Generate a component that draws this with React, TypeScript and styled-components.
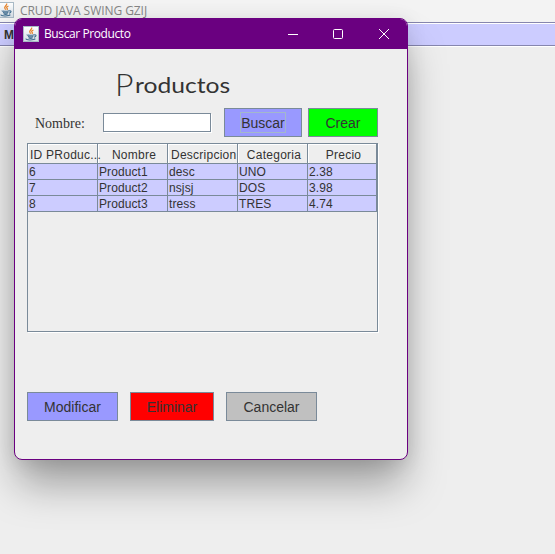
import React from "react";
import styled, { createGlobalStyle } from "styled-components";

const LINE = "#7a8a99";
const LILAC = "#ccccff";
const PURPLE = "#6a0080";
const SANS = '"Liberation Sans", Arial, sans-serif';
const UI = '"Open Sans", "Noto Sans", sans-serif';

const GlobalStyle = createGlobalStyle`
  *, *::before, *::after { box-sizing: border-box; }
  html, body { margin: 0; padding: 0; overflow: hidden; background: #eeeeee; }
`;

const MainFrame = styled.div`
  position: relative;
  width: 555px;
  height: 554px;
  overflow: hidden;
  background: #eeeeee;
  color: #333333;
  font-family: ${SANS};
`;

const MainTitleBar = styled.header`
  display: flex;
  align-items: center;
  height: 22px;
  padding: 0 0 2px;
  gap: 6px;
  background: #f3f3f3;
  color: #868686;
  font: 12px/20px ${UI};
`;

const MainTitle = styled.span`
  padding-top: 2px;
  letter-spacing: -0.06px;
  white-space: nowrap;
`;

const MainIcon = styled.span`
  display: flex;
  width: 14px;
  justify-content: flex-end;

  svg { flex: none; }
`;

const MenuBar = styled.nav`
  height: 25px;
  padding: 2px 4px 0;
  border-top: 1px solid #8686ae;
  border-bottom: 1px solid #ffffff;
  background: ${LILAC};
  box-shadow: inset 0 1px #ffffff, inset 0 -1px #8686ae;
  font: bold 12px/20px ${SANS};
`;

const Dialog = styled.section`
  position: absolute;
  left: 14px;
  top: 18px;
  width: 394px;
  height: 442px;
  display: flex;
  flex-direction: column;
  overflow: hidden;
  border: 1px solid ${PURPLE};
  border-radius: 8px;
  background: #eeeeee;
  box-shadow: 0 28px 42px -4px rgba(0, 0, 0, 0.34), 0 2px 20px rgba(0, 0, 0, 0.1);
`;

const DialogTitleBar = styled.header`
  display: flex;
  align-items: center;
  flex: none;
  height: 30px;
  padding-left: 8px;
  background: ${PURPLE};
  color: #ffffff;
`;

const DialogTitle = styled.span`
  flex: 1;
  padding-left: 5px;
  font: 12px/18px ${UI};
  letter-spacing: -0.4px;
`;

const WindowControls = styled.div`
  display: flex;
`;

const WindowButton = styled.button`
  display: grid;
  place-items: center;
  width: 45.5px;
  height: 30px;
  padding: 0 1px 0 0;
  border: 0;
  background: none;
  color: #ffffff;
`;

const Content = styled.main`
  display: flex;
  flex-direction: column;
  padding: 0 29px 0 12px;
`;

const Heading = styled.h1`
  display: flex;
  align-items: baseline;
  width: 140px;
  height: 40px;
  margin: 16px 0 3px 88px;
  font: 400 22px/40px Lato, sans-serif;
  white-space: nowrap;
`;

const Initial = styled.span`
  display: inline-block;
  font-size: 32px;
  line-height: 32px;
  font-weight: 300;
  transform: translateY(3px);
`;

const HeadingRest = styled.span`
  display: inline-block;
  margin-left: 1px;
  transform: scaleX(1.12);
  transform-origin: left;
`;

const SearchRow = styled.div`
  display: flex;
  align-items: center;
  height: 29px;
`;

const Label = styled.label`
  width: 76px;
  padding: 2px 0 0 8px;
  font: 14px/18px "Liberation Serif", serif;
`;

const Field = styled.input`
  width: 108px;
  height: 19px;
  margin: 0 13px 0 0;
  padding: 0 3px;
  border: 1px solid ${LINE};
  border-radius: 0;
  background: #ffffff;
  box-shadow: 1px 1px #ffffff;
  outline: 0;
`;

const SwingButton = styled.button<{ $fill: string; $width: number }>`
  display: grid;
  place-items: center;
  width: ${(p) => p.$width}px;
  height: 29px;
  padding: 2px 0 0;
  border: 1px solid ${LINE};
  background: ${(p) => p.$fill};
  color: #333333;
  font: 14px/19px ${SANS};
`;

const FocusRing = styled.span`
  height: 21px;
  margin: -2px -1px 0;
  padding-top: 1px;
  border: 1px solid #a3b8cc;
`;

const Gap = styled.span<{ $size: number }>`
  width: ${(p) => p.$size}px;
`;

const ScrollPane = styled.div`
  width: 351px;
  height: 189px;
  margin-top: 6px;
  border: 1px solid ${LINE};
  box-shadow: 1px 1px #ffffff;
`;

const Table = styled.table`
  width: 349px;
  table-layout: fixed;
  border-collapse: separate;
  border-spacing: 0;
  font: 12px/14px ${SANS};
`;

const HeadCell = styled.th<{ $inset?: number }>`
  height: 20px;
  padding: 3px 0 0 ${(p) => p.$inset ?? 3}px;
  border-right: 1px solid ${LINE};
  border-bottom: 1px solid ${LINE};
  box-shadow: inset 1px 1px #ffffff;
  font-weight: 400;
  letter-spacing: 0.25px;
  text-align: ${(p) => (p.$inset ? "left" : "center")};
  white-space: nowrap;
`;

const Cell = styled.td`
  height: 16px;
  padding: 1px 0 0 1px;
  border-right: 1px solid ${LINE};
  border-bottom: 1px solid ${LINE};
  background: ${LILAC};
  letter-spacing: 0.1px;
`;

const ActionRow = styled.div`
  display: flex;
  gap: 12px;
  margin-top: 60px;
`;

const columns: { name: string; inset?: number }[] = [
  { name: "ID PRoduc...", inset: 2 },
  { name: "Nombre" },
  { name: "Descripcion", inset: 3 },
  { name: "Categoria" },
  { name: "Precio" },
];
const rows = [
  ["6", "Product1", "desc", "UNO", "2.38"],
  ["7", "Product2", "nsjsj", "DOS", "3.98"],
  ["8", "Product3", "tress", "TRES", "4.74"],
];

function JavaIcon() {
  return (
    <svg width="16" height="16" viewBox="0 0 16 16" fill="none">
      <defs>
        <linearGradient id="tile" x2="0" y2="1">
          <stop stopColor="#ffffff" />
          <stop offset="1" stopColor="#d5dde4" />
        </linearGradient>
      </defs>
      <rect x=".5" y=".5" width="15" height="15" fill="url(#tile)" stroke="#a9bac6" />
      <path d="M8.6 1.5c1 2-3.3 2.8-1.6 5.2l.8 1M10.5 4c-2.6 1-2 1.6-1.2 2.6.3.5 0 .9-.4 1.3" stroke="#e5842c" strokeWidth="1.3" />
      <path d="M4.3 8.7c-1.3.8 5.6.8 6.8 0M5 10.4c1.5.5 4 .5 5.3 0M5.6 12c1.3.4 2.9.4 4 0M3.3 12.6c-1.6 1.6 7.6 1.9 9 .1M11.2 8.9c2.7-.6 2.2 1.7-.2 2.4" stroke="#416f91" strokeWidth="1.1" />
    </svg>
  );
}

export default function App() {
  return (
    <MainFrame>
      <GlobalStyle />
      <MainTitleBar>
        <MainIcon><JavaIcon /></MainIcon>
        <MainTitle>CRUD JAVA SWING GZIJ</MainTitle>
      </MainTitleBar>
      <MenuBar>M</MenuBar>
      <Dialog>
        <DialogTitleBar>
          <JavaIcon />
          <DialogTitle>Buscar Producto</DialogTitle>
          <WindowControls>
            <WindowButton aria-label="Minimizar">
              <svg width="10" height="11"><path d="M0 5.5h10" stroke="currentColor" /></svg>
            </WindowButton>
            <WindowButton aria-label="Maximizar">
              <svg width="10" height="10"><rect x=".5" y=".5" width="9" height="9" rx="1" fill="none" stroke="currentColor" /></svg>
            </WindowButton>
            <WindowButton aria-label="Cerrar">
              <svg width="10" height="10"><path d="M0 0l10 10M10 0L0 10" stroke="currentColor" /></svg>
            </WindowButton>
          </WindowControls>
        </DialogTitleBar>
        <Content>
          <Heading><Initial>P</Initial><HeadingRest>roductos</HeadingRest></Heading>
          <SearchRow>
            <Label htmlFor="nombre">Nombre:</Label>
            <Field id="nombre" />
            <SwingButton $fill="#9999ff" $width={78}><FocusRing>Buscar</FocusRing></SwingButton>
            <Gap $size={6} />
            <SwingButton $fill="#00ff00" $width={70}>Crear</SwingButton>
          </SearchRow>
          <ScrollPane>
            <Table>
              <colgroup>
                <col width="70" /><col width="70" /><col width="70" /><col width="70" /><col width="69" />
              </colgroup>
              <thead>
                <tr>
                  {columns.map(({ name, inset }) => (
                    <HeadCell key={name} $inset={inset}>{name}</HeadCell>
                  ))}
                </tr>
              </thead>
              <tbody>
                {rows.map((row) => (
                  <tr key={row[0]}>
                    {row.map((value) => <Cell key={value}>{value}</Cell>)}
                  </tr>
                ))}
              </tbody>
            </Table>
          </ScrollPane>
          <ActionRow>
            <SwingButton $fill="#9999ff" $width={91}>Modificar</SwingButton>
            <SwingButton $fill="#ff0000" $width={84}>Eliminar</SwingButton>
            <SwingButton $fill="#c0c0c0" $width={91}>Cancelar</SwingButton>
          </ActionRow>
        </Content>
      </Dialog>
    </MainFrame>
  );
}
